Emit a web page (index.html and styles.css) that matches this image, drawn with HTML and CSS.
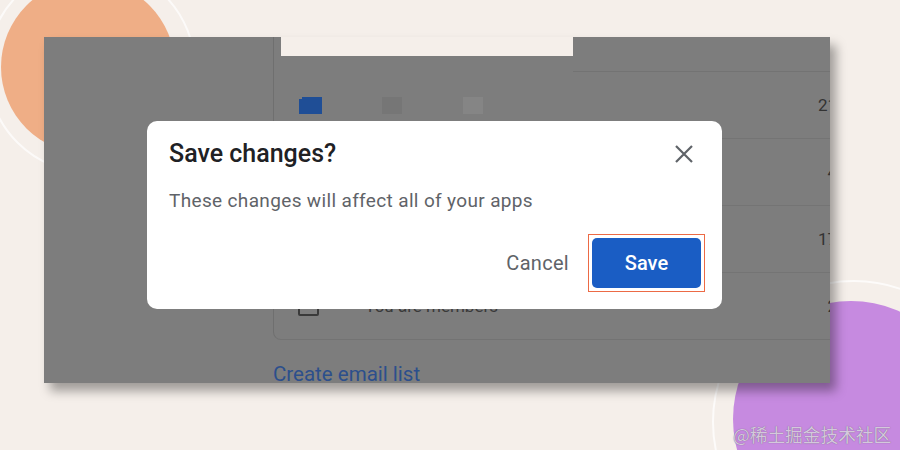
FILE: index.html
```html
<!DOCTYPE html>
<html lang="en">
<head>
    <meta charset="UTF-8">
    <meta name="viewport" content="width=device-width, initial-scale=1.0">
    <title>Save changes</title>
    <link rel="stylesheet" href="styles.css">
</head>
<body>
    <div class="stage">
        <div class="blob blob-orange"></div>
        <div class="ring ring-orange"></div>
        <div class="blob blob-purple"></div>
        <div class="ring ring-purple"></div>

        <div class="panel">
            <div class="side"></div>
            <div class="list">
                <div class="card">
                    <div class="card-head">
                        <div class="notch"></div>
                        <div class="head-rest"></div>
                    </div>
                    <div class="row">
                        <span class="sq sq-blue"></span>
                        <span class="sq sq-dark"></span>
                        <span class="sq sq-light"></span>
                        <span class="value">21</span>
                    </div>
                    <div class="row">
                        <span class="value">4</span>
                    </div>
                    <div class="row">
                        <span class="value">17</span>
                    </div>
                    <div class="row last">
                        <span class="check"></span>
                        <span class="row-name">You are members</span>
                        <span class="value">2</span>
                    </div>
                </div>
                <a class="create-link" href="#">Create email list</a>
            </div>
        </div>

        <div class="dialog">
            <div class="dialog-head">
                <h2>Save changes?</h2>
                <svg class="close" width="18" height="18" viewBox="0 0 18 18">
                    <path d="M1 1L17 17M17 1L1 17" stroke="#5f6368" stroke-width="2.2" fill="none"/>
                </svg>
            </div>
            <p>These changes will affect all of your apps</p>
            <div class="actions">
                <button class="btn-cancel">Cancel</button>
                <div class="highlight">
                    <button class="btn-save">Save</button>
                </div>
            </div>
        </div>

        <div class="watermark">@稀土掘金技术社区</div>
    </div>
</body>
</html>
```

FILE: styles.css
```css
body {
    margin: 0;
    font-family: Roboto, "Noto Sans", sans-serif;
    background: #f5efea;
    overflow: hidden;
}

.stage {
    position: relative;
    width: 900px;
    height: 450px;
    padding: 37px 0 0 44px;
    box-sizing: border-box;
    overflow: hidden;
}

/* decorative circles */
.blob, .ring {
    position: absolute;
    border-radius: 50%;
}

.blob-orange {
    left: 1px;
    top: -20px;
    width: 174px;
    height: 174px;
    background: #efae86;
}

.ring-orange {
    left: -14px;
    top: -36px;
    width: 206px;
    height: 206px;
    border: 2px solid rgba(255, 255, 255, 0.7);
}

.blob-purple {
    left: 733px;
    top: 301px;
    width: 236px;
    height: 236px;
    background: #c68ae0;
}

.ring-purple {
    left: 712px;
    top: 280px;
    width: 280px;
    height: 280px;
    border: 2px solid rgba(255, 255, 255, 0.75);
}

.panel {
    position: relative;
    width: 786px;
    height: 346px;
    background: #7d7d7d;
    box-shadow: 6px 8px 10px rgba(0, 0, 0, 0.35);
    display: grid;
    grid-template-columns: 229px 1fr;
    overflow: hidden;
}

.list {
    display: flex;
    flex-direction: column;
}

.card {
    border-left: 1px solid #6f6f6f;
    border-bottom: 1px solid #737373;
    border-bottom-left-radius: 8px;
}

.card-head {
    display: flex;
    height: 35px;
}

.notch {
    margin-left: 7px;
    width: 292px;
    height: 19px;
    background: #f5efea;
}

.head-rest {
    flex: 1;
    border-bottom: 1px solid #737373;
}

.row {
    display: flex;
    align-items: center;
    height: 66px;
    border-bottom: 1px solid #747474;
    padding-left: 28px;
    color: #333333;
    font-size: 17px;
}

.row.last {
    border-bottom: none;
    align-items: flex-end;
    padding-left: 24px;
    padding-bottom: 23px;
    box-sizing: border-box;
}

.sq {
    width: 20px;
    height: 17px;
    margin-right: 60px;
}

.sq-blue {
    background: #1f4e96;
    box-shadow: -4px 1px 0 -1px #1f4e96;
}

.sq-dark {
    background: #767676;
}

.sq-light {
    margin-left: 1px;
    background: #858585;
}

.value {
    margin-left: auto;
    margin-right: -7px;
}

.check {
    width: 17px;
    height: 15px;
    border: 2px solid #3a3a3a;
    border-radius: 2px;
    margin-right: 46px;
}

.row-name {
    color: #3a3a3a;
}

.create-link {
    margin-top: 22px;
    color: #2c4f8c;
    font-size: 20.5px;
    text-decoration: none;
}

/* dialog on top of the dimmed page */
.dialog {
    position: absolute;
    left: 147px;
    top: 121px;
    width: 575px;
    height: 188px;
    box-sizing: border-box;
    padding: 19px 17px 0 22px;
    background: #ffffff;
    border-radius: 10px;
}

.dialog-head {
    display: flex;
    justify-content: space-between;
    align-items: center;
    padding-right: 12px;
}

.dialog h2 {
    margin: 0;
    font-size: 25px;
    line-height: 28px;
    font-weight: 500;
    color: #202124;
}

.dialog p {
    margin: 21px 0 0;
    font-size: 19px;
    line-height: 24px;
    letter-spacing: 0.35px;
    color: #5f6368;
}

.actions {
    display: flex;
    justify-content: flex-end;
    align-items: center;
    margin-top: 21px;
}

.btn-cancel {
    background: none;
    border: none;
    padding: 0;
    margin-right: 19px;
    font-family: inherit;
    font-size: 20px;
    letter-spacing: 0.3px;
    color: #5f6368;
}

.highlight {
    border: 1.5px solid #ec6a45;
    padding: 3px;
}

.btn-save {
    display: block;
    width: 109px;
    height: 50px;
    background: #1a5dc4;
    color: #ffffff;
    border: none;
    border-radius: 5px;
    font-family: inherit;
    font-size: 20px;
    font-weight: 500;
}

.watermark {
    position: absolute;
    left: 733px;
    top: 421px;
    font-family: "Noto Sans CJK SC", sans-serif;
    font-size: 17.7px;
    color: #d4c8dc;
    text-shadow: 0 0 1px #6e5c7a;
}
```
